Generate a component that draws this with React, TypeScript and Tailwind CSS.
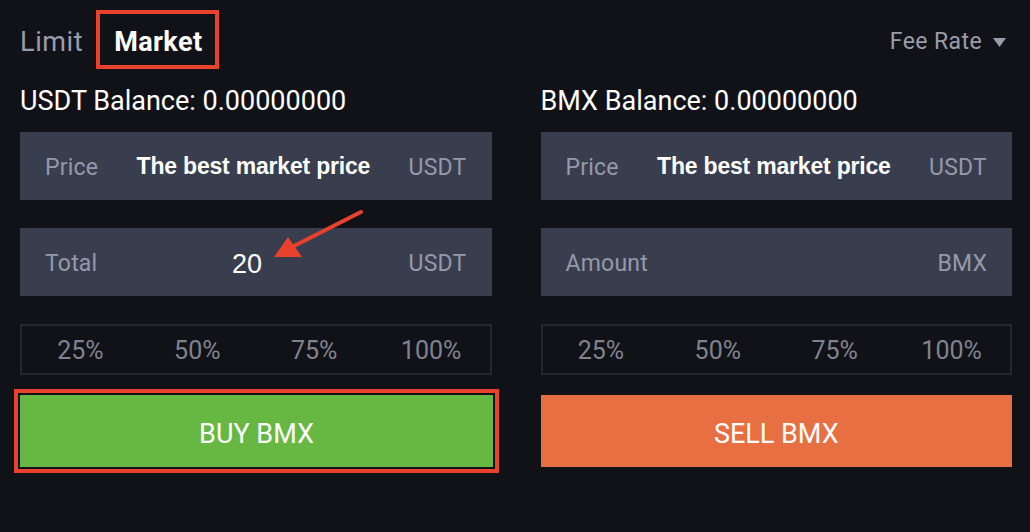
import React from "react";

const din = { fontFamily: "Roboto, 'Noto Sans', sans-serif" };

function Field({ label, value, unit, big }: { label: string; value?: string; unit: string; big?: boolean }) {
  return (
    <div className="h-[68px] bg-[#393e4f] flex items-center px-[25px]">
      <span className="text-[23px] text-[#9699a8] tracking-[0.2px] pt-[4px]">{label}</span>
      <span
        className={`flex-1 text-center text-white font-['Liberation_Sans',Arial,sans-serif] ${big ? "text-[27px] pr-[12px] pt-[4px]" : "text-[23px] tracking-[-0.2px] leading-none pt-[1px]"}`}
        style={!big ? { fontWeight: 600 } : undefined}
      >
        {value}
      </span>
      <span className="text-[23px] text-[#9699a8] tracking-[0.2px] pt-[4px]">{unit}</span>
    </div>
  );
}

function Percents() {
  return (
    <div className="h-[51px] border-2 border-[#25272f] grid grid-cols-4 items-center text-[25px] text-[#80838f] pt-[3px]">
      {["25%", "50%", "75%", "100%"].map((p) => (
        <span key={p} className="text-center">{p}</span>
      ))}
    </div>
  );
}

export default function App() {
  return (
    <div className="relative w-[1030px] h-[532px] bg-[#111218] pl-[20px] pr-[18px] pt-[10px] overflow-hidden" style={din}>
      <div className="h-[59px] flex items-center">
        <span className="text-[27px] text-[#9a9cab] tracking-[0.6px] pt-[5px]">Limit</span>
        <div className="ml-[13px] h-[59px] border-4 border-[#e8412c] flex items-center pl-[14px] pr-[13px] pt-[5px]">
          <span className="text-[27px] text-white font-bold tracking-[0.4px]">Market</span>
        </div>
        <div className="ml-auto flex items-center gap-[11px] pr-[6px] mt-[6px]">
          <span className="text-[23px] text-[#9a9cab] tracking-[0.4px]">Fee Rate</span>
          <svg width="13" height="9" viewBox="0 0 13 9">
            <path d="M0 0 L13 0 L6.5 9 Z" fill="#9a9cab" />
          </svg>
        </div>
      </div>

      <div className="grid grid-cols-2 gap-x-[49px]">
        <div className="flex flex-col">
          <div className="h-[63px] flex items-center text-[27px] text-white pt-[2px]">USDT Balance: 0.00000000</div>
          <Field label="Price" value="The best market price" unit="USDT" />
          <div className="h-[28px]" />
          <Field label="Total" value="20" unit="USDT" big />
          <div className="h-[28px]" />
          <Percents />
          <div className="h-[20px]" />
          <button className="h-[72px] bg-[#67b843] text-white text-[27px] pt-[6px] outline-4 outline-[#e8412c] outline-offset-2 w-[473px]">
            BUY BMX
          </button>
        </div>
        <div className="flex flex-col">
          <div className="h-[63px] flex items-center text-[27px] text-white pt-[2px]">BMX Balance: 0.00000000</div>
          <Field label="Price" value="The best market price" unit="USDT" />
          <div className="h-[28px]" />
          <Field label="Amount" unit="BMX" />
          <div className="h-[28px]" />
          <Percents />
          <div className="h-[20px]" />
          <button className="h-[72px] bg-[#e86f41] text-white text-[27px] pt-[6px]">SELL BMX</button>
        </div>
      </div>

      <svg className="absolute left-0 top-0 pointer-events-none" width="1030" height="532" viewBox="0 0 1030 532">
        <line x1="361" y1="212" x2="292" y2="247" stroke="#e8412c" strokeWidth="4" strokeLinecap="round" />
        <path d="M274 257 L288 237 L302 257 Z" fill="#e8412c" />
      </svg>
    </div>
  );
}
